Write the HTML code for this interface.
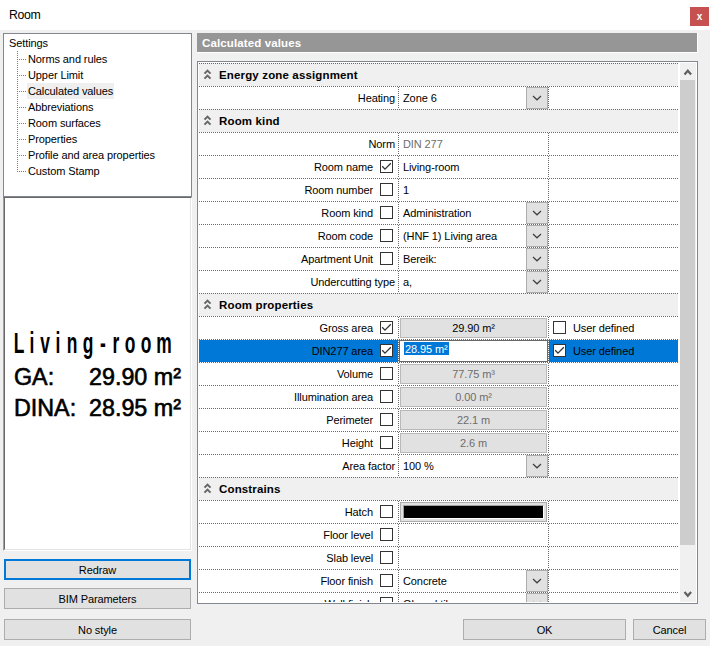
<!DOCTYPE html>
<html><head><meta charset="utf-8">
<style>
*{margin:0;padding:0;box-sizing:border-box}
html,body{width:710px;height:646px;overflow:hidden;background:#f0f0f0;font-family:"Liberation Sans",sans-serif;font-size:11px;color:#000;position:relative;letter-spacing:-0.1px}
.abs{position:absolute}
#title{position:absolute;left:0;top:0;width:710px;height:30px;background:#fff}
#title span{position:absolute;left:9px;top:8px;font-size:12.3px;line-height:15px;letter-spacing:-0.35px}
#close{position:absolute;left:690px;top:7px;width:19px;height:19px;background:#c75050;color:#fff;font-weight:bold;font-size:10px;line-height:20px;text-align:center}
#tree{position:absolute;left:3px;top:33px;width:189px;height:164px;background:#fff;border:1px solid #828790}
#preview{position:absolute;left:3px;top:197px;width:189px;height:354px;background:#fff;border-top:1px solid #696969;border-left:1px solid #a0a0a0;border-right:1px solid #fff;border-bottom:1px solid #fff}
#preview .in{position:absolute;left:0;top:0;right:0;bottom:0;border-left:1px solid #696969;border-right:1px solid #e3e3e3;border-bottom:1px solid #e3e3e3}
.btn{position:absolute;height:21px;background:#e1e1e1;border:1px solid #adadad;text-align:center;line-height:21px;white-space:nowrap}
#hdr{position:absolute;left:197px;top:33px;width:501px;height:20px;background:#969696;border-right:1px solid #fff;border-bottom:1px solid #fff}
#hdr span{position:absolute;left:5px;top:3px;color:#fff;font-weight:bold;font-size:11.5px;line-height:14px;letter-spacing:0.12px}
#grid{position:absolute;left:197px;top:61px;width:501px;height:543px;background:#fff;border:1px solid #828790;overflow:hidden}
#rows{position:absolute;left:-198px;top:-62px;width:710px;height:646px}
.hrow{position:absolute;left:199px;width:479px;height:23px;background:#f0f0f0}
.hline{position:absolute;left:199px;width:479px;height:1px;background:repeating-linear-gradient(to right,#6a6a6a 0 1px,transparent 1px 2px)}
.vline{position:absolute;width:1px;height:22px;background:repeating-linear-gradient(to bottom,#6a6a6a 0 1px,transparent 1px 2px)}
.htxt{position:absolute;left:219px;height:23px;line-height:25px;font-weight:bold;font-size:11.5px;letter-spacing:0.15px;white-space:nowrap}
.chev{position:absolute}
.lbl{position:absolute;height:23px;line-height:25px;white-space:nowrap;text-align:right}
.val{position:absolute;left:403px;height:23px;line-height:25px;white-space:nowrap}
.g{color:#6d6d6d}
.cb{position:absolute;width:13px;height:13px;border:1px solid #333;background:#fff}
.ddb{position:absolute;left:526px;width:22px;height:22px;background:#e1e1e1;border:1px solid #adadad}
.fld{position:absolute;left:400px;width:147px;height:20px;background:#e1e1e1;border:1px solid #b9b9b9;text-align:center;line-height:18px;white-space:nowrap}
.edit{position:absolute;left:399px;width:149px;height:22px;background:#fff;border:1px solid #6a6a6a;white-space:nowrap}
.edit span{position:absolute;left:4px;top:1px;height:13px;line-height:15px;background:#0078d7;color:#fff;padding:0 1px}
.hatch{position:absolute;left:400px;width:147px;height:20px;background:#e1e1e1;border:1px solid #adadad}
.hatch div{position:absolute;left:2px;top:2px;width:141px;height:14px;background:#000;border-top:1px solid #a0a0a0;border-left:1px solid #a0a0a0;border-bottom:1px solid #fff;border-right:1px solid #fff}
.selrow{position:absolute;left:199px;width:479px;height:22px;background:#0078d7}
.editbg{position:absolute;left:398px;width:151px;height:24px;background:#fff}
.ud{position:absolute;left:573px;height:23px;line-height:25px;white-space:nowrap}
.tl{position:absolute}
.ti{position:absolute;height:16px;line-height:17px;white-space:nowrap;padding:0 1px}
.ti.sel{background:#efefef}
.pc{position:absolute;top:325px;width:40px;text-align:center;font-size:30px;line-height:36px;letter-spacing:0;font-weight:bold;transform:scaleX(0.58)}
.pt{position:absolute;font-size:23.3px;line-height:30px;white-space:nowrap;letter-spacing:0;-webkit-text-stroke:0.6px #000}
#sb{position:absolute;left:680px;top:63px;width:16px;height:539px;background:#f0f0f0}
#thumb{position:absolute;left:680px;top:80px;width:15px;height:465px;background:#cdcdcd}
</style></head><body>
<div id="title"><span>Room</span></div>
<div id="close">x</div>
<div id="tree">
<div class="tl" style="left:13px;top:17px;width:1px;height:121px;background:repeating-linear-gradient(to bottom,#808080 0 1px,transparent 1px 2px)"></div>
<div class="ti" style="left:4px;top:1px">Settings</div>
<div class="tl" style="left:15px;top:25px;width:7px;height:1px;background:repeating-linear-gradient(to right,#808080 0 1px,transparent 1px 2px)"></div>
<div class="ti" style="left:23px;top:17px">Norms and rules</div>
<div class="tl" style="left:15px;top:41px;width:7px;height:1px;background:repeating-linear-gradient(to right,#808080 0 1px,transparent 1px 2px)"></div>
<div class="ti" style="left:23px;top:33px">Upper Limit</div>
<div class="tl" style="left:15px;top:57px;width:7px;height:1px;background:repeating-linear-gradient(to right,#808080 0 1px,transparent 1px 2px)"></div>
<div class="ti sel" style="left:23px;top:49px">Calculated values</div>
<div class="tl" style="left:15px;top:73px;width:7px;height:1px;background:repeating-linear-gradient(to right,#808080 0 1px,transparent 1px 2px)"></div>
<div class="ti" style="left:23px;top:65px">Abbreviations</div>
<div class="tl" style="left:15px;top:89px;width:7px;height:1px;background:repeating-linear-gradient(to right,#808080 0 1px,transparent 1px 2px)"></div>
<div class="ti" style="left:23px;top:81px">Room surfaces</div>
<div class="tl" style="left:15px;top:105px;width:7px;height:1px;background:repeating-linear-gradient(to right,#808080 0 1px,transparent 1px 2px)"></div>
<div class="ti" style="left:23px;top:97px">Properties</div>
<div class="tl" style="left:15px;top:121px;width:7px;height:1px;background:repeating-linear-gradient(to right,#808080 0 1px,transparent 1px 2px)"></div>
<div class="ti" style="left:23px;top:113px">Profile and area properties</div>
<div class="tl" style="left:15px;top:137px;width:7px;height:1px;background:repeating-linear-gradient(to right,#808080 0 1px,transparent 1px 2px)"></div>
<div class="ti" style="left:23px;top:129px">Custom Stamp</div></div>
<div id="preview"><div class="in"></div></div>
<div class="pc" style="left:-1.25px">L</div>
<div class="pc" style="left:12.100000000000001px">i</div>
<div class="pc" style="left:24.85px">v</div>
<div class="pc" style="left:38.2px">i</div>
<div class="pc" style="left:52.099999999999994px">n</div>
<div class="pc" style="left:68.25px">g</div>
<div class="pc" style="left:82.95px">-</div>
<div class="pc" style="left:95.65px">r</div>
<div class="pc" style="left:109.94999999999999px">o</div>
<div class="pc" style="left:126.4px">o</div>
<div class="pc" style="left:144.45px">m</div>
<div class="pt" style="left:14px;top:362px">GA:</div>
<div class="pt" style="left:89px;top:362px">29.90 m²</div>
<div class="pt" style="left:14px;top:393px">DINA:</div>
<div class="pt" style="left:89px;top:393px">28.95 m²</div>
<div class="btn" style="left:4px;top:559px;width:187px;border:2px solid #0078d7;line-height:19px">Redraw</div>
<div class="btn" style="left:4px;top:588px;width:187px">BIM Parameters</div>
<div class="btn" style="left:4px;top:619px;width:187px">No style</div>
<div class="btn" style="left:463px;top:619px;width:163px">OK</div>
<div class="btn" style="left:633px;top:619px;width:73px">Cancel</div>
<div id="hdr"><span>Calculated values</span></div>
<div id="grid"><div id="rows">
<div class="hrow" style="top:63px"></div>
<div class="hline" style="top:63px"></div>
<svg class="chev" style="left:203px;top:68px" width="10" height="12"><polyline points="1.5,5.6 4.5,2.6 7.5,5.6" fill="none" stroke="#666" stroke-width="2"/><polyline points="1.5,10.6 4.5,7.6 7.5,10.6" fill="none" stroke="#666" stroke-width="2"/></svg>
<div class="htxt" style="top:63px">Energy zone assignment</div>
<div class="hline" style="top:86px"></div>
<div class="vline" style="left:398px;top:87px"></div>
<div class="vline" style="left:548px;top:87px"></div>
<div class="lbl" style="top:86px;right:315px">Heating</div>
<div class="val" style="top:86px">Zone 6</div>
<div class="ddb" style="top:87px"><svg width="22" height="22" style="position:absolute;left:-1px;top:-1px"><polyline points="7,9 11,12.8 15,9" fill="none" stroke="#404040" stroke-width="1.2"/></svg></div>
<div class="hrow" style="top:109px"></div>
<div class="hline" style="top:109px"></div>
<svg class="chev" style="left:203px;top:114px" width="10" height="12"><polyline points="1.5,5.6 4.5,2.6 7.5,5.6" fill="none" stroke="#666" stroke-width="2"/><polyline points="1.5,10.6 4.5,7.6 7.5,10.6" fill="none" stroke="#666" stroke-width="2"/></svg>
<div class="htxt" style="top:109px">Room kind</div>
<div class="hline" style="top:132px"></div>
<div class="vline" style="left:398px;top:133px"></div>
<div class="vline" style="left:548px;top:133px"></div>
<div class="lbl" style="top:132px;right:315px">Norm</div>
<div class="val g" style="top:132px">DIN 277</div>
<div class="hline" style="top:155px"></div>
<div class="vline" style="left:398px;top:156px"></div>
<div class="vline" style="left:548px;top:156px"></div>
<div class="lbl" style="top:155px;right:337px">Room name</div>
<div class="cb" style="left:380px;top:160px"><svg width="13" height="13" style="position:absolute;left:0;top:0"><polyline points="1.2,5.3 4,8.1 9.8,2.3" fill="none" stroke="#333" stroke-width="1.3"/></svg></div>
<div class="val" style="top:155px">Living-room</div>
<div class="hline" style="top:178px"></div>
<div class="vline" style="left:398px;top:179px"></div>
<div class="vline" style="left:548px;top:179px"></div>
<div class="lbl" style="top:178px;right:337px">Room number</div>
<div class="cb" style="left:380px;top:183px"></div>
<div class="val" style="top:178px">1</div>
<div class="hline" style="top:201px"></div>
<div class="vline" style="left:398px;top:202px"></div>
<div class="vline" style="left:548px;top:202px"></div>
<div class="lbl" style="top:201px;right:337px">Room kind</div>
<div class="cb" style="left:380px;top:206px"></div>
<div class="val" style="top:201px">Administration</div>
<div class="ddb" style="top:202px"><svg width="22" height="22" style="position:absolute;left:-1px;top:-1px"><polyline points="7,9 11,12.8 15,9" fill="none" stroke="#404040" stroke-width="1.2"/></svg></div>
<div class="hline" style="top:224px"></div>
<div class="vline" style="left:398px;top:225px"></div>
<div class="vline" style="left:548px;top:225px"></div>
<div class="lbl" style="top:224px;right:337px">Room code</div>
<div class="cb" style="left:380px;top:229px"></div>
<div class="val" style="top:224px">(HNF 1) Living area</div>
<div class="ddb" style="top:225px"><svg width="22" height="22" style="position:absolute;left:-1px;top:-1px"><polyline points="7,9 11,12.8 15,9" fill="none" stroke="#404040" stroke-width="1.2"/></svg></div>
<div class="hline" style="top:247px"></div>
<div class="vline" style="left:398px;top:248px"></div>
<div class="vline" style="left:548px;top:248px"></div>
<div class="lbl" style="top:247px;right:337px">Apartment Unit</div>
<div class="cb" style="left:380px;top:252px"></div>
<div class="val" style="top:247px">Bereik:</div>
<div class="ddb" style="top:248px"><svg width="22" height="22" style="position:absolute;left:-1px;top:-1px"><polyline points="7,9 11,12.8 15,9" fill="none" stroke="#404040" stroke-width="1.2"/></svg></div>
<div class="hline" style="top:270px"></div>
<div class="vline" style="left:398px;top:271px"></div>
<div class="vline" style="left:548px;top:271px"></div>
<div class="lbl" style="top:270px;right:315px">Undercutting type</div>
<div class="val" style="top:270px">a,</div>
<div class="ddb" style="top:271px"><svg width="22" height="22" style="position:absolute;left:-1px;top:-1px"><polyline points="7,9 11,12.8 15,9" fill="none" stroke="#404040" stroke-width="1.2"/></svg></div>
<div class="hrow" style="top:293px"></div>
<div class="hline" style="top:293px"></div>
<svg class="chev" style="left:203px;top:298px" width="10" height="12"><polyline points="1.5,5.6 4.5,2.6 7.5,5.6" fill="none" stroke="#666" stroke-width="2"/><polyline points="1.5,10.6 4.5,7.6 7.5,10.6" fill="none" stroke="#666" stroke-width="2"/></svg>
<div class="htxt" style="top:293px">Room properties</div>
<div class="hline" style="top:316px"></div>
<div class="vline" style="left:398px;top:317px"></div>
<div class="vline" style="left:548px;top:317px"></div>
<div class="lbl" style="top:316px;right:337px">Gross area</div>
<div class="cb" style="left:380px;top:321px"><svg width="13" height="13" style="position:absolute;left:0;top:0"><polyline points="1.2,5.3 4,8.1 9.8,2.3" fill="none" stroke="#333" stroke-width="1.3"/></svg></div>
<div class="fld" style="top:318px">29.90 m²</div>
<div class="cb" style="left:553px;top:321px"></div>
<div class="ud" style="top:316px">User defined</div>
<div class="selrow" style="top:340px"></div>
<div class="editbg" style="top:339px"></div>
<div class="hline" style="top:339px"></div>
<div class="vline" style="left:398px;top:340px"></div>
<div class="vline" style="left:548px;top:340px"></div>
<div class="lbl sel" style="top:339px;right:337px">DIN277 area</div>
<div class="cb" style="left:380px;top:344px"><svg width="13" height="13" style="position:absolute;left:0;top:0"><polyline points="1.2,5.3 4,8.1 9.8,2.3" fill="none" stroke="#333" stroke-width="1.3"/></svg></div>
<div class="edit" style="top:340px"><span>28.95 m²</span></div>
<div class="cb" style="left:553px;top:344px"><svg width="13" height="13" style="position:absolute;left:0;top:0"><polyline points="1.2,5.3 4,8.1 9.8,2.3" fill="none" stroke="#333" stroke-width="1.3"/></svg></div>
<div class="ud" style="top:339px">User defined</div>
<div class="hline" style="top:362px"></div>
<div class="vline" style="left:398px;top:363px"></div>
<div class="vline" style="left:548px;top:363px"></div>
<div class="lbl" style="top:362px;right:337px">Volume</div>
<div class="cb" style="left:380px;top:367px"></div>
<div class="fld g" style="top:364px">77.75 m³</div>
<div class="hline" style="top:385px"></div>
<div class="vline" style="left:398px;top:386px"></div>
<div class="vline" style="left:548px;top:386px"></div>
<div class="lbl" style="top:385px;right:337px">Illumination area</div>
<div class="cb" style="left:380px;top:390px"></div>
<div class="fld g" style="top:387px">0.00 m²</div>
<div class="hline" style="top:408px"></div>
<div class="vline" style="left:398px;top:409px"></div>
<div class="vline" style="left:548px;top:409px"></div>
<div class="lbl" style="top:408px;right:337px">Perimeter</div>
<div class="cb" style="left:380px;top:413px"></div>
<div class="fld g" style="top:410px">22.1 m</div>
<div class="hline" style="top:431px"></div>
<div class="vline" style="left:398px;top:432px"></div>
<div class="vline" style="left:548px;top:432px"></div>
<div class="lbl" style="top:431px;right:337px">Height</div>
<div class="cb" style="left:380px;top:436px"></div>
<div class="fld g" style="top:433px">2.6 m</div>
<div class="hline" style="top:454px"></div>
<div class="vline" style="left:398px;top:455px"></div>
<div class="vline" style="left:548px;top:455px"></div>
<div class="lbl" style="top:454px;right:315px">Area factor</div>
<div class="val" style="top:454px">100 %</div>
<div class="ddb" style="top:455px"><svg width="22" height="22" style="position:absolute;left:-1px;top:-1px"><polyline points="7,9 11,12.8 15,9" fill="none" stroke="#404040" stroke-width="1.2"/></svg></div>
<div class="hrow" style="top:477px"></div>
<div class="hline" style="top:477px"></div>
<svg class="chev" style="left:203px;top:482px" width="10" height="12"><polyline points="1.5,5.6 4.5,2.6 7.5,5.6" fill="none" stroke="#666" stroke-width="2"/><polyline points="1.5,10.6 4.5,7.6 7.5,10.6" fill="none" stroke="#666" stroke-width="2"/></svg>
<div class="htxt" style="top:477px">Constrains</div>
<div class="hline" style="top:500px"></div>
<div class="vline" style="left:398px;top:501px"></div>
<div class="vline" style="left:548px;top:501px"></div>
<div class="lbl" style="top:500px;right:337px">Hatch</div>
<div class="cb" style="left:380px;top:505px"></div>
<div class="hatch" style="top:502px"><div></div></div>
<div class="hline" style="top:523px"></div>
<div class="vline" style="left:398px;top:524px"></div>
<div class="vline" style="left:548px;top:524px"></div>
<div class="lbl" style="top:523px;right:337px">Floor level</div>
<div class="cb" style="left:380px;top:528px"></div>
<div class="val" style="top:523px"></div>
<div class="hline" style="top:546px"></div>
<div class="vline" style="left:398px;top:547px"></div>
<div class="vline" style="left:548px;top:547px"></div>
<div class="lbl" style="top:546px;right:337px">Slab level</div>
<div class="cb" style="left:380px;top:551px"></div>
<div class="val" style="top:546px"></div>
<div class="hline" style="top:569px"></div>
<div class="vline" style="left:398px;top:570px"></div>
<div class="vline" style="left:548px;top:570px"></div>
<div class="lbl" style="top:569px;right:337px">Floor finish</div>
<div class="cb" style="left:380px;top:574px"></div>
<div class="val" style="top:569px">Concrete</div>
<div class="ddb" style="top:570px"><svg width="22" height="22" style="position:absolute;left:-1px;top:-1px"><polyline points="7,9 11,12.8 15,9" fill="none" stroke="#404040" stroke-width="1.2"/></svg></div>
<div class="hline" style="top:592px"></div>
<div class="vline" style="left:398px;top:593px"></div>
<div class="vline" style="left:548px;top:593px"></div>
<div class="lbl" style="top:592px;right:337px">Wall finish</div>
<div class="cb" style="left:380px;top:597px"></div>
<div class="val" style="top:592px">Glazed tile</div>
<div class="ddb" style="top:593px"><svg width="22" height="22" style="position:absolute;left:-1px;top:-1px"><polyline points="7,9 11,12.8 15,9" fill="none" stroke="#404040" stroke-width="1.2"/></svg></div>
<div style="position:absolute;left:198px;top:602px;width:499px;height:1px;background:#fff"></div>
<div id="sb"></div>
<div id="thumb"></div>
<svg style="position:absolute;left:680px;top:63px" width="16" height="17"><polyline points="4.5,11.5 7.8,7.7 11.1,11.5" fill="none" stroke="#606060" stroke-width="2.2"/></svg>
<svg style="position:absolute;left:680px;top:585px" width="16" height="17"><polyline points="4.5,7 7.8,10.8 11.1,7" fill="none" stroke="#606060" stroke-width="2.2"/></svg>
</div></div>
</body></html>
